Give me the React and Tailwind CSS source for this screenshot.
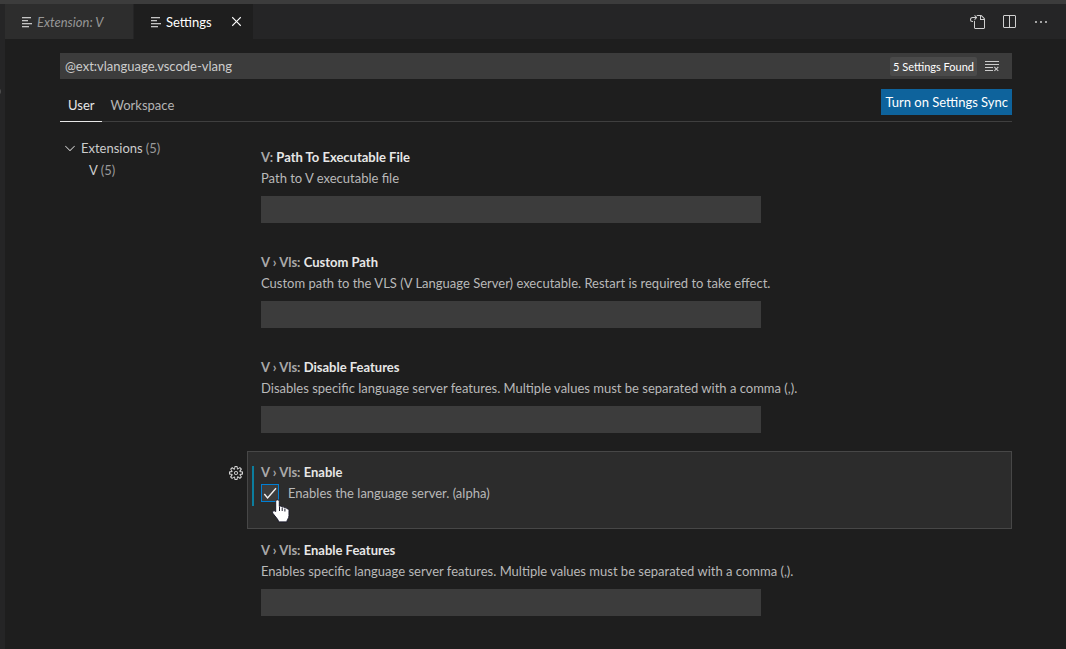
import { useState } from "react";
import {
  VscChevronDown,
  VscClearAll,
  VscClose,
  VscEllipsis,
  VscGear,
  VscGoToFile,
  VscSplitHorizontal,
} from "react-icons/vsc";

const SETTINGS = [
  { id: "path", category: "V:", name: "Path To Executable File", text: "Path to V executable file" },
  {
    id: "custom-path",
    category: "V › Vls:",
    name: "Custom Path",
    text: "Custom path to the VLS (V Language Server) executable. Restart is required to take effect.",
  },
  {
    id: "disable-features",
    category: "V › Vls:",
    name: "Disable Features",
    text: "Disables specific language server features. Multiple values must be separated with a comma (,).",
  },
  { id: "enable", category: "V › Vls:", name: "Enable", text: "Enables the language server. (alpha)", toggle: true },
  {
    id: "enable-features",
    category: "V › Vls:",
    name: "Enable Features",
    text: "Enables specific language server features. Multiple values must be separated with a comma (,).",
  },
];

function LinesIcon() {
  return (
    <svg width="10" height="12" viewBox="0 0 10 12" fill="#c5c5c5" className="shrink-0" aria-hidden="true">
      <rect x="0" y="0" width="9" height="1.300" />
      <rect x="0" y="3" width="6" height="1.300" />
      <rect x="0" y="6" width="10" height="1.300" />
      <rect x="0" y="9" width="7" height="1.300" />
    </svg>
  );
}

function HandPointer() {
  return (
    <svg
      width="18"
      height="24"
      viewBox="0 0 18 24"
      className="pointer-events-none absolute top-[17px] left-[11px]"
      aria-hidden="true"
    >
      <path
        d="M5.500 .8C6.600 .8 7.300 1.600 7.300 2.600V7.500c.5-.7 2.500-.6 2.700.8.500-.8 2.500-.5 2.700.8.600-.6 2.400-.3 2.700.9.900-.2 1.600.5 1.600 1.600v4.900c0 1.500-.5 2.700-1.200 3.700-.6.800-.8 1.300-.8 2.700H6.500c0-1.300-.4-1.900-1.100-2.800L1 14.500c-.7-1-.5-2 .3-2.500.8-.4 1.800-.1 2.400.6V2.600c0-1 .7-1.800 1.800-1.800z"
        fill="#fff"
        stroke="#1a1a2b"
        strokeWidth="1"
      />
      <path d="M7.500 8v4M10.200 9v3M12.900 10v2.500" stroke="#1a1a2b" strokeWidth="1" fill="none" />
    </svg>
  );
}

function Title({ setting }) {
  return (
    <h2 className="text-[13px] leading-5 font-bold text-[#e7e7e7]">
      <span className="text-[#a9a9a9]">{setting.category}</span> {setting.name}
    </h2>
  );
}

function TextSetting({ setting }) {
  return (
    <div className="ml-[18px] border border-transparent px-[13px] pt-[10px] pb-[17px]">
      <Title setting={setting} />
      <label htmlFor={setting.id} className="block leading-[22px] text-[#b9b9b9]">
        {setting.text}
      </label>
      <input
        id={setting.id}
        type="text"
        className="mt-[7px] block h-[27px] w-full max-w-[500px] bg-[#3c3c3c] px-1.5 text-[#cccccc] outline-none"
      />
    </div>
  );
}

function ToggleSetting({ setting }) {
  const [on, setOn] = useState(true);
  return (
    <div className="flex">
      <button type="button" aria-label="More actions" className="mt-[14px] h-4 w-[18px] shrink-0 text-[#d4d4d4]">
        <VscGear size={16} className="-ml-px" />
      </button>
      <div className="relative flex-1 border border-[#474747] bg-[#2c2c2c] px-[13px] pt-[10px] pb-6">
        <span className="absolute top-[14px] left-1 h-10 w-0.5 bg-[#0c7d9d]" />
        <Title setting={setting} />
        <div className="relative flex items-center">
          <span className="grid size-[18px] shrink-0 place-items-center">
            <input
              id={setting.id}
              type="checkbox"
              checked={on}
              onChange={(e) => setOn(e.target.checked)}
              className="col-start-1 row-start-1 size-[18px] appearance-none border border-[#007fd4] bg-[#3c3c3c] outline-none"
            />
            {on && (
              <svg width="16" height="16" viewBox="0 0 16 16" className="pointer-events-none col-start-1 row-start-1" aria-hidden="true">
                <path d="M2.300 9l3.300 4L14 3.300" fill="none" stroke="#f0f0f0" strokeWidth="1.400" />
              </svg>
            )}
          </span>
          <label htmlFor={setting.id} className="pl-[9px] leading-[22px] text-[#b9b9b9]">
            {setting.text}
          </label>
          <HandPointer />
        </div>
      </div>
    </div>
  );
}

export default function App() {
  const [query, setQuery] = useState("@ext:vlanguage.vscode-vlang");
  return (
    <div className="flex min-h-screen flex-col border-t-4 border-[#3c3c3c] bg-[#1e1e1e] font-['Lato','Open_Sans',sans-serif] text-[13px] text-[#cccccc]">
      <div className="flex flex-1">
        <div className="w-[5px] shrink-0 overflow-hidden bg-[#252526] pt-[83px]">
          <div className="-ml-2 size-[9px] rounded-full bg-[#4d4d4d]" />
        </div>
        <div className="min-w-0 flex-1">
          <div className="flex h-[35px] items-stretch bg-[#252526]">
            <button type="button" className="flex w-[129px] items-center gap-[5px] border-r border-[#252526] bg-[#2d2d2d] pt-0.5 pl-[17px] text-[#969696] italic">
              <LinesIcon />
              Extension: V
            </button>
            <div className="flex w-[119px] items-center bg-[#1e1e1e] pl-[17px] text-white">
              <button type="button" className="flex items-center gap-[5px] pt-0.5">
                <LinesIcon />
                Settings
              </button>
              <button type="button" aria-label="Close" className="mr-2 ml-auto">
                <VscClose size={17} />
              </button>
            </div>
            <div className="ml-auto flex items-center gap-4 pr-[17px] text-[#d0d0d0]">
              <button type="button" aria-label="Open settings file"><VscGoToFile size={16} /></button>
              <button type="button" aria-label="Split editor"><VscSplitHorizontal size={16} /></button>
              <button type="button" aria-label="More"><VscEllipsis size={16} /></button>
            </div>
          </div>

          <main className="pt-[14px] pr-[54px] pl-[55px]">
            <div className="flex h-[26px] items-center bg-[#3c3c3c] pr-3 pl-[5px]">
              <input
                type="text"
                aria-label="Search settings"
                value={query}
                onChange={(e) => setQuery(e.target.value)}
                className="min-w-0 flex-1 bg-transparent pt-0.5 outline-none"
              />
              <span className="rounded-[2px] bg-[#4a4a4a] px-[3px] text-[11px] leading-[19px] text-white">5 Settings Found</span>
              <button type="button" aria-label="Clear search" className="ml-[7px]">
                <VscClearAll size={16} />
              </button>
            </div>

            <div className="flex h-[43px] items-end justify-between border-b border-[#3f3f3f]">
              <nav className="-mb-px flex">
                <button type="button" className="h-[33px] border-b border-[#e7e7e7] px-2 pt-0.5 text-[#e7e7e7]">User</button>
                <button type="button" className="h-[33px] border-b border-transparent px-2 pt-0.5 text-[#b5b5b5]">Workspace</button>
              </nav>
              <button type="button" className="mb-1.5 h-[26px] bg-[#0e639c] px-1 pt-0.5 text-white">Turn on Settings Sync</button>
            </div>

            <div className="flex pt-[14px]">
              <nav className="w-[169px] shrink-0 pt-px leading-[22px]">
                <a href="#extensions" className="flex items-center pl-0.5">
                  <VscChevronDown size={16} className="mr-[3px]" />
                  Extensions <span className="ml-[3px] text-[#9a9a9a]">(5)</span>
                </a>
                <a href="#v" className="block pl-[29px]">
                  V <span className="text-[#9a9a9a]">(5)</span>
                </a>
              </nav>
              <div className="min-w-0 flex-1">
                {SETTINGS.map((s) =>
                  s.toggle ? <ToggleSetting key={s.id} setting={s} /> : <TextSetting key={s.id} setting={s} />
                )}
              </div>
            </div>
          </main>
        </div>
      </div>
    </div>
  );
}
